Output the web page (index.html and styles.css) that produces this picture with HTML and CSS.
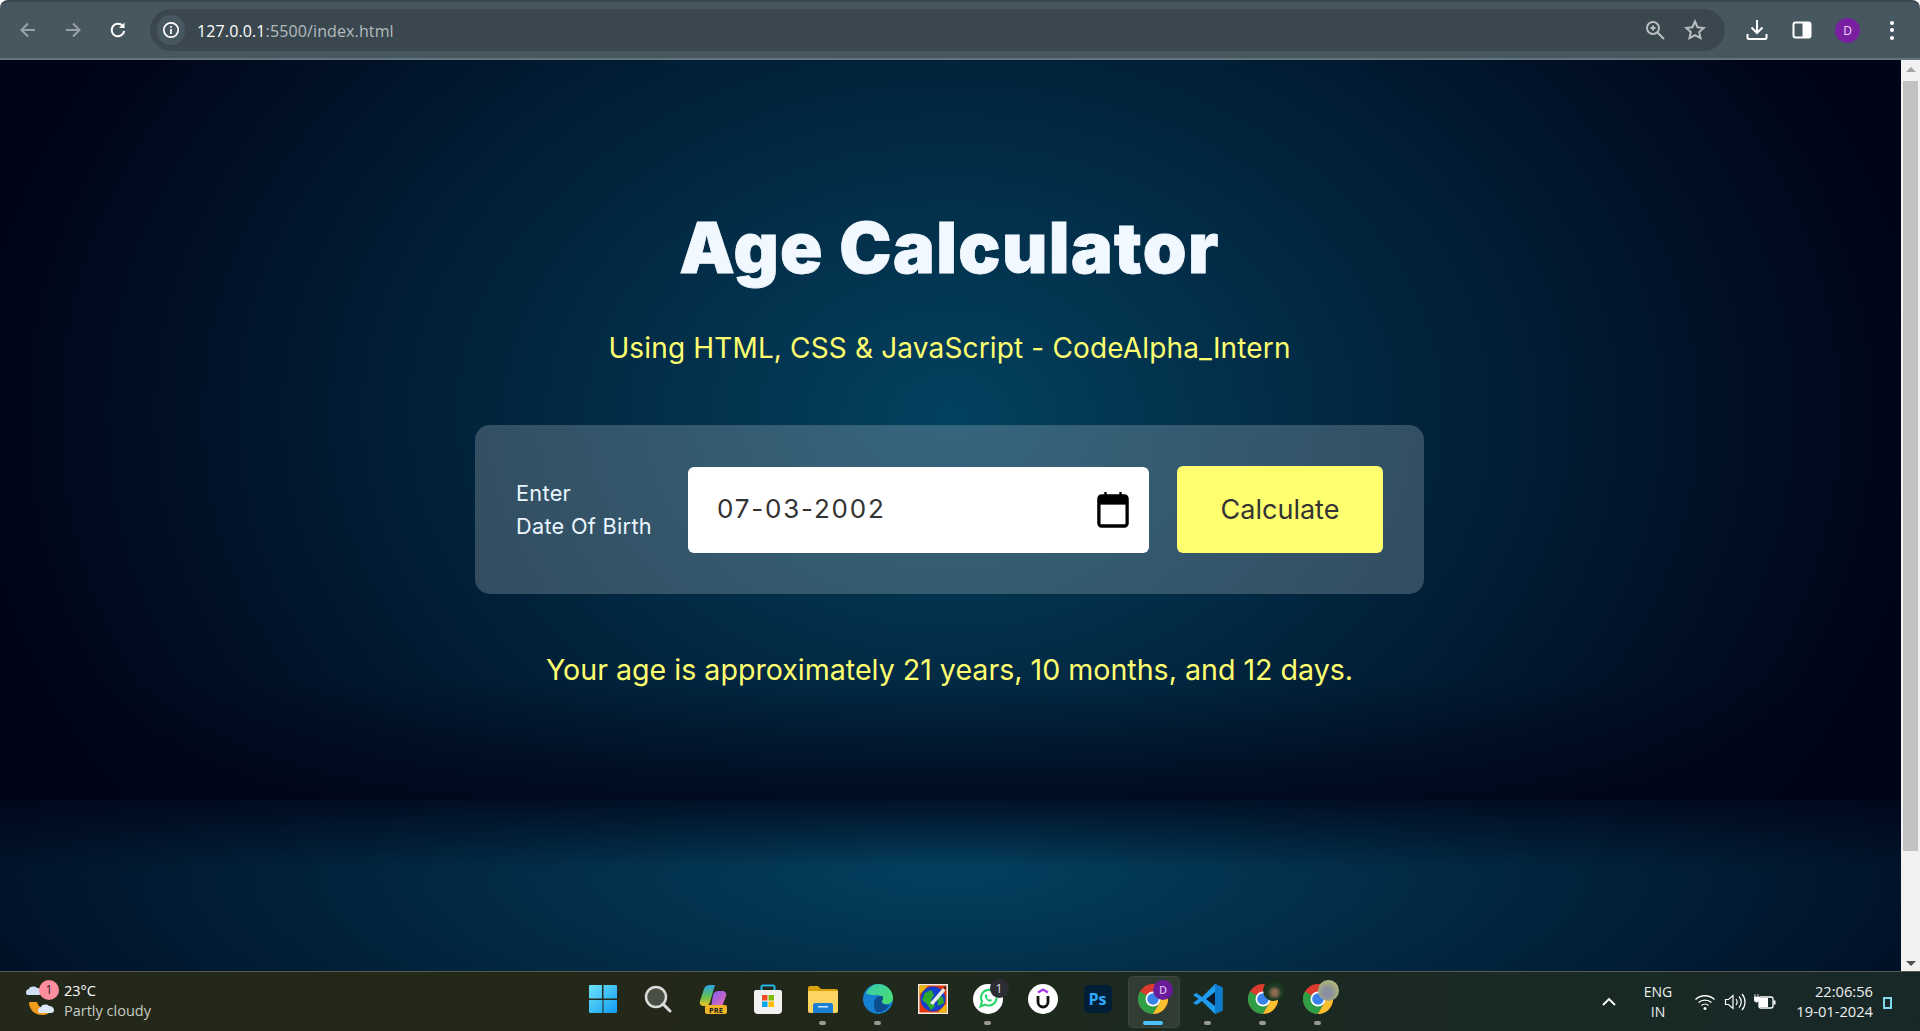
FILE: index.html
```html
<!DOCTYPE html>
<html lang="en">
<head>
<meta charset="utf-8">
<title>Age Calculator</title>
<link rel="stylesheet" href="styles.css">
</head>
<body>
<div class="window">
  <header class="toolbar">
    <div class="nav">
      <svg class="ic" width="20" height="20" viewBox="0 0 20 20"><path d="M17 10H4M10 3.5 3.5 10l6.500 6.500" class="st dim"/></svg>
      <svg class="ic" width="20" height="20" viewBox="0 0 20 20"><path d="M3 10h13M10 3.500l6.500 6.500-6.500 6.500" class="st dim"/></svg>
      <svg class="ic" width="20" height="20" viewBox="0 0 20 20"><path d="M16.200 11a6.300 6.300 0 1 1-1.500-5.200" class="st wh"/><path d="M16.500 2.500v5.500H11z" class="fl"/></svg>
    </div>
    <div class="omni">
      <div class="info"><svg width="18" height="18" viewBox="0 0 18 18"><circle cx="9" cy="9" r="7.200" class="st wh thin"/><path d="M9 8v5M9 5v1.800" class="st wh thin"/></svg></div>
      <div class="url"><span class="host">127.0.0.1</span>:5500/index.html</div>
      <svg class="zoom-ic" width="20" height="20" viewBox="0 0 20 20"><circle cx="8" cy="8" r="6" class="st gr"/><path d="M12.500 12.500 19 19M5.500 8h5M8 5.500v5" class="st gr"/></svg>
      <svg class="star-ic" width="22" height="22" viewBox="0 0 22 22"><path d="m11 2.500 2.600 5.700 6.200.7-4.600 4.200 1.300 6.100L11 16.200l-5.500 3 1.300-6.100-4.600-4.200 6.200-.7z" class="st gr"/></svg>
    </div>
    <div class="actions">
      <svg width="22" height="22" viewBox="0 0 22 22"><path d="M11 1v13M5.500 8.500 11 14l5.500-5.500M1.500 15v3.500c0 1 .5 1.500 1.500 1.500h16c1 0 1.500-.5 1.500-1.500V15" class="st wh"/></svg>
      <svg width="20" height="20" viewBox="0 0 20 20"><rect x="1.500" y="2.500" width="17" height="15" rx="2" class="st wh"/><rect x="10.500" y="2.500" width="8" height="15" class="fl"/></svg>
      <div class="avatar">D</div>
      <div class="kebab"><i></i><i></i><i></i></div>
    </div>
  </header>

  <div class="viewport">
    <main class="page">
      <h1 class="title">Age Calculator</h1>
      <p class="subtitle">Using HTML, CSS &amp; JavaScript - CodeAlpha_Intern</p>
      <section class="card">
        <div class="label">Enter<br>Date Of Birth</div>
        <div class="date">
          <span class="date-text">07-03-2002</span>
          <svg class="cal" width="32" height="37" viewBox="0 0 34 38" preserveAspectRatio="none"><path d="M9 1v6M25 1v6" stroke="#000" stroke-width="2.500"/><rect x="2" y="5" width="30" height="31" rx="3" fill="#fff" stroke="#000" stroke-width="3.500"/><rect x="2" y="5" width="30" height="9" fill="#000"/></svg>
        </div>
        <button class="calc" type="button">Calculate</button>
      </section>
      <p class="result">Your age is approximately 21 years, 10 months, and 12 days.</p>
    </main>
    <aside class="scrollbar">
      <div class="arrow up"></div>
      <div class="track"><div class="thumb"></div></div>
      <div class="arrow down"></div>
    </aside>
  </div>

  <footer class="taskbar">
    <div class="weather">
      <div class="weather-ic">
        <svg width="36" height="36" viewBox="0 0 36 36"><path d="M5 18c0 9 7 13 13 13 5 0 8-2 10-6-6 2-13 0-15-7z" fill="#f09a1a"/><path d="M2 8c0-2 2-3 3-3 1-3 6-3 8-1 3 0 5 2 5 4 0 2-1 3-3 3H4C2 11 2 9 2 8z" fill="#cfe0f5"/><path d="M14 26c0-2 2-3 3-3 1-3 6-3 8-1 3 0 5 2 5 4 0 2-1 3-3 3H16c-2 0-2-2-2-3z" fill="#dbe8f8"/></svg>
        <span class="badge-pink">1</span>
      </div>
      <div class="weather-text"><div class="temp">23°C</div><div class="sky">Partly cloudy</div></div>
    </div>

    <div class="apps">
      <div class="app">
        <svg width="30" height="30" viewBox="0 0 30 30"><defs><linearGradient id="win" x1="0" y1="0" x2="1" y2="1"><stop offset="0" stop-color="#6fe3fb"/><stop offset="1" stop-color="#0f9bf0"/></linearGradient></defs><path d="M1 2a1 1 0 0 1 1-1h12v13.500H1zM15.500 1H28a1 1 0 0 1 1 1v12.500H15.500zM1 16h13.500v13H2a1 1 0 0 1-1-1zM15.500 16H29v12a1 1 0 0 1-1 1H15.500z" fill="url(#win)"/></svg>
      </div>
      <div class="app">
        <svg width="28" height="28" viewBox="0 0 28 28"><circle cx="12" cy="12" r="10" fill="#4a4f44" stroke="#dcdcdc" stroke-width="2.500"/><path d="m19 19 7 7" stroke="#dcdcdc" stroke-width="3" stroke-linecap="round"/></svg>
      </div>
      <div class="app">
        <svg width="30" height="30" viewBox="0 0 30 30"><defs><linearGradient id="cop1" x1="0" y1="0" x2="0" y2="1"><stop offset="0" stop-color="#27a4e8"/><stop offset=".6" stop-color="#6cc04a"/><stop offset="1" stop-color="#f7c52b"/></linearGradient><linearGradient id="cop2" x1="0" y1="0" x2="1" y2="1"><stop offset="0" stop-color="#7a5cf0"/><stop offset="1" stop-color="#f36cb2"/></linearGradient></defs><path d="M2 17 6 5c1-3 3-4 6-4h5l-5 17c-1 3-3 4-6 4-3 0-5-2-4-5z" fill="url(#cop1)"/><path d="M15 11c1-3 3-4 5-4h4c3 0 5 2 4 5l-3 8c-1 2-2 3-5 3h-7z" fill="url(#cop2)"/><rect x="7" y="21" width="22" height="9" rx="2" fill="#f0b429"/><text x="18" y="28.500" class="pre">PRE</text></svg>
      </div>
      <div class="app">
        <svg width="30" height="30" viewBox="0 0 30 30"><path d="M8.500 7V3c0-1 .5-1.500 1.500-1.500h10c1 0 1.500.5 1.500 1.500v4" fill="none" stroke="#25b5e8" stroke-width="2"/><path d="M1 8a2 2 0 0 1 2-2h24a2 2 0 0 1 2 2v18a4 4 0 0 1-4 4H5a4 4 0 0 1-4-4z" fill="#f2f2f2"/><rect x="9" y="11" width="5.500" height="5.500" fill="#f25022"/><rect x="15.500" y="11" width="5.500" height="5.500" fill="#7fba00"/><rect x="9" y="17.500" width="5.500" height="5.500" fill="#00a4ef"/><rect x="15.500" y="17.500" width="5.500" height="5.500" fill="#ffb900"/></svg>
      </div>
      <div class="app running">
        <svg width="30" height="28" viewBox="0 0 30 28"><path d="M0 3a2 2 0 0 1 2-2h8l3 3h15a2 2 0 0 1 2 2v3H0z" fill="#d9a008"/><path d="M0 6h30v20a2 2 0 0 1-2 2H2a2 2 0 0 1-2-2z" fill="#fcd462"/><path d="M5 20a2 2 0 0 1 2-2h16a2 2 0 0 1 2 2v8H5z" fill="#1d7fd1"/><rect x="10" y="21" width="10" height="1.500" fill="#cfe8ff"/></svg>
      </div>
      <div class="app running">
        <svg width="30" height="30" viewBox="0 0 30 30"><defs><linearGradient id="edge" x1="0" y1="0" x2="1" y2="1"><stop offset="0" stop-color="#37c8b0"/><stop offset="1" stop-color="#4ce06a"/></linearGradient></defs><circle cx="15" cy="15" r="15" fill="#1580cf"/><path d="M3 9C6 3 11 0 15 0c9 0 15 7 15 14 0 4-3 6-7 6-3 0-5-2-4-3 1-3-1-6-5-6-4 0-9 0-11-2z" fill="url(#edge)"/><path d="M11 19c0-4 3-7 7-7 2 0 3 2 1 5-1 2 2 4 5 4 1 0 2 0 3-1-3 6-9 9-13 8-3-2-3-6-3-9z" fill="#0c4d8f"/></svg>
      </div>
      <div class="app">
        <svg width="30" height="30" viewBox="0 0 30 30"><rect width="30" height="30" fill="#f6efe0"/><rect x="1.500" y="1.500" width="27" height="27" fill="#e2340f"/><path d="M1.500 1.500h9l-9 9zM28.500 28.500h-9l9-9z" fill="#e8b80f"/><circle cx="15" cy="15" r="12.500" fill="#1240c8"/><path d="M7 9l6-3 3 5-3 5 4 6-4 4-5-7-4-3zM19 12l6 1 1 6-6 3z" fill="#2fa82f"/><path d="m12 19 13-15 2.500 2.500L15 21z" fill="#e8e8e8"/><path d="m25 4 3-2v3z" fill="#222"/></svg>
      </div>
      <div class="app running">
        <div class="wa"><svg width="30" height="30" viewBox="0 0 30 30"><circle cx="15" cy="15" r="15" fill="#fff"/><path d="M7.500 22.500 9 17.500a7.800 7.800 0 1 1 3 3z" fill="none" stroke="#25d366" stroke-width="2"/><path d="M12.500 10.500c-1 1-1 2.500.5 4.500s3.500 3 5 2.500l1-1.500-2-1-1 .7c-1-.5-1.800-1.400-2.200-2.400l.8-1-1-2z" fill="#25d366"/></svg><span class="badge-dark">1</span></div>
      </div>
      <div class="app">
        <svg width="30" height="30" viewBox="0 0 30 30"><circle cx="15" cy="15" r="15" fill="#fff"/><path d="m10 8.500 5-3 5 3" fill="none" stroke="#a435f0" stroke-width="2.200"/><path d="M10 12v6a5 5 0 0 0 10 0v-6" fill="none" stroke="#111" stroke-width="2.800"/></svg>
      </div>
      <div class="app">
        <div class="ps">Ps</div>
      </div>
      <div class="app active">
        <svg width="30" height="30" viewBox="0 0 30 30"><use href="#chrome"/></svg>
        <span class="badge-profile">D</span>
      </div>
      <div class="app running">
        <svg width="30" height="30" viewBox="0 0 30 30"><path d="M22 0 29.500 3.500v23L22 30 9 17l-5.500 4L0 19l5.500-4L0 11l3.500-2L9 13z" fill="#1f9cf0"/><path d="M22 8v14l-9-7z" fill="#0a1a2a"/><path d="M22 0 29.500 3.500v23L22 30z" fill="#0d7ccc"/></svg>
      </div>
      <div class="app running">
        <svg width="30" height="30" viewBox="0 0 30 30"><use href="#chrome"/></svg>
        <span class="badge-photo green"></span>
      </div>
      <div class="app running">
        <svg width="30" height="30" viewBox="0 0 30 30"><use href="#chrome"/></svg>
        <span class="badge-photo tan"></span>
      </div>
    </div>

    <div class="tray">
      <svg class="caret" width="16" height="10" viewBox="0 0 16 10"><path d="m2 8 6-6 6 6" fill="none" stroke="#fff" stroke-width="1.800"/></svg>
      <div class="lang">ENG<br>IN</div>
      <svg class="wifi" width="22" height="18" viewBox="0 0 22 18"><path d="M1.500 6.500c5-5 14-5 19 0M4.500 9.500c3.500-3.300 9.500-3.300 13 0M7.500 12.500c2-1.800 5-1.800 7 0" fill="none" stroke="#fff" stroke-width="1.300"/><circle cx="11" cy="15.500" r="1.500" fill="#fff"/></svg>
      <svg class="vol" width="22" height="18" viewBox="0 0 22 18"><path d="M1.500 6.500h3l4.500-4v13l-4.500-4h-3z" fill="none" stroke="#fff" stroke-width="1.200"/><path d="M12 6c1.500 2 1.500 4 0 6M15 3.500c3 3 3 8 0 11M18 1c4 4.500 4 11.500 0 16" fill="none" stroke="#fff" stroke-width="1.200"/></svg>
      <svg class="batt" width="22" height="18" viewBox="0 0 22 18"><rect x="5" y="4" width="14" height="11" rx="2" fill="none" stroke="#fff" stroke-width="1.300"/><rect x="5" y="5" width="9" height="9" fill="#fff"/><rect x="19.500" y="7.500" width="2" height="4" fill="#fff"/><path d="M1 1v3M4 1v3M0 4h5v2c0 2-1 3-2.500 3S0 8 0 6z" fill="#fff" stroke="#fff" stroke-width=".8"/></svg>
      <div class="clock">22:06:56<br>19-01-2024</div>
      <div class="notif"></div>
    </div>
  </footer>
</div>

<svg class="defs" width="0" height="0">
  <defs>
    <g id="chrome">
      <circle cx="15" cy="15" r="15" fill="#de3b2f"/>
      <path d="M15 15 2 7.500A15 15 0 0 0 15 30l7.500-13z" fill="#2f9e44"/>
      <path d="M15 15l7.500 2L15 30A15 15 0 0 0 28 7.500H15z" fill="#fbc02d"/>
      <circle cx="15" cy="15" r="7.500" fill="#fff"/>
      <circle cx="15" cy="15" r="5.800" fill="#3b82e8"/>
    </g>
  </defs>
</svg>
</body>
</html>
```

FILE: styles.css
```css
* { box-sizing: border-box; }
html, body { margin: 0; height: 100%; }
body { overflow: hidden; font-family: "Inter", "Liberation Sans", sans-serif; }
.defs { display: block; height: 0; }

.window { height: 1031px; display: flex; flex-direction: column; }

/* browser toolbar */
.toolbar {
  height: 60px; flex: none; display: flex; align-items: center;
  background: #47575f; border-top: 2px solid #38464e;
  border-bottom: 2px solid #66757c; padding: 0 0 0 18px; border-radius: 8px 8px 0 0;
}
.nav { display: flex; align-items: center; gap: 25px; margin-right: 22px; width: 110px; }
.ic { flex: none; }
.st { fill: none; stroke-width: 2; }
.dim { stroke: #98a3a8; }
.wh { stroke: #fff; }
.gr { stroke: #b9bfc2; }
.thin { stroke-width: 1.700; }
.fl { fill: #fff; }
.omni {
  width: 1575px; height: 42px; flex: none; background: #3b474e; border-radius: 21px;
  display: flex; align-items: center; padding-left: 7px; padding-right: 19px;
}
.info {
  width: 28px; height: 30px; border-radius: 15px; background: #47575f;
  display: flex; align-items: center; justify-content: center; flex: none;
}
.url { margin: 1px 0 0 12px; flex: 1; font: 16px/20px "Open Sans", sans-serif; color: #b4bcc0; letter-spacing: .12px; }
.host { color: #fff; }
.zoom-ic { margin-right: 19px; }
.actions { flex: 1; display: flex; align-items: center; padding-left: 21px; }
.actions > svg:nth-child(2) { margin-left: 24px; }
.avatar {
  width: 25px; height: 25px; border-radius: 50%; background: #7a1fa2; color: #f0d9ff;
  font: 12px/25px "Open Sans", sans-serif; text-align: center; margin-left: 23px;
}
.kebab { display: flex; flex-direction: column; gap: 3.500px; margin-left: 30px; }
.kebab i { width: 4px; height: 4px; border-radius: 50%; background: #fff; display: block; }

/* page */
.viewport { flex: 1; display: flex; min-height: 0; }
.page {
  flex: 1; display: flex; flex-direction: column; align-items: center;
  padding: 146px 2px 0 0; color: #fff;
  background:
    linear-gradient(to bottom, rgba(0,4,23,0) 620px, rgba(0,4,23,.72) 740px, rgba(0,4,23,0) 808px),
    radial-gradient(ellipse 1270px 390px at 50% 68px, #03405f 0%, #000417 100%) 0 740px / 100% 172px no-repeat,
    radial-gradient(ellipse 970px 720px at 50% 355px, #03415f 0%, #000417 100%) 0 0 / 100% 740px no-repeat,
    #000417;
}
.title {
  margin: 0; font: 900 70px/84px "Inter", sans-serif; color: #f2f8ff; letter-spacing: 1.400px;
  -webkit-text-stroke: .8px #f2f8ff;
}
.subtitle { margin: 41px 0 0; font: 400 28px/34px "Inter", sans-serif; color: #ffff70; letter-spacing: .15px; }
.card {
  margin-top: 60px; width: 949px; height: 169px; background: rgba(255,255,255,.2);
  border-radius: 15px; display: flex; align-items: center; padding: 0 41px;
}
.label { width: 172px; font-size: 21.700px; line-height: 33px; color: #eaf6ff; flex: none; letter-spacing: .3px; }
.date {
  width: 461px; height: 86px; background: #fff; border-radius: 6px; flex: none;
  display: flex; align-items: center; justify-content: space-between; padding: 0 20px 0 29px; margin-top: 1px;
}
.date-text { font-size: 26px; color: #333; letter-spacing: 1.800px; margin-bottom: 4px; }
.cal { margin-bottom: 1px; }
.calc {
  width: 206px; height: 87px; margin-left: 28px; border: 0; border-radius: 6px; background: #ffff70;
  font: 400 27px "Inter", sans-serif; color: #333;
}
.result { margin: 58px 0 0; font-size: 28.600px; line-height: 36px; color: #ffff70; }

/* scrollbar */
.scrollbar { width: 19px; flex: none; background: #f1f1f1; display: flex; flex-direction: column; align-items: center; }
.arrow { width: 0; height: 0; border-left: 5px solid transparent; border-right: 5px solid transparent; flex: none; }
.arrow.up { border-bottom: 5px solid #a3a3a3; margin: 7px 0 9px; }
.arrow.down { border-top: 5px solid #505050; margin: 6px 0 5px; }
.track { flex: 1; width: 100%; padding: 0 2px; }
.thumb { height: 770px; background: #c1c1c1; }

/* taskbar */
.taskbar {
  height: 60px; flex: none; display: grid; grid-template-columns: 575px 770px 1fr; align-items: center;
  background: linear-gradient(90deg, #23281a 0%, #232818 35%, #1a2a22 70%, #182828 100%);
  border-top: 1px solid #555a4c; color: #fff; font-family: "Open Sans", sans-serif;
}
.weather { display: flex; align-items: center; padding-left: 24px; }
.weather-ic { position: relative; width: 40px; height: 40px; display: flex; align-items: center; flex: none; }
.badge-pink {
  position: absolute; left: 15px; top: -2px; width: 20px; height: 20px; border-radius: 50%;
  background: #ff8e9e; color: #222; font-size: 12px; line-height: 20px; text-align: center;
}
.weather-text { font-size: 14.500px; line-height: 20px; margin-bottom: 2px; }
.temp { color: #fff; }
.sky { color: #c8ccc4; }

.apps { display: flex; height: 100%; }
.app { position: relative; width: 55px; height: 100%; display: flex; align-items: center; justify-content: center; padding-bottom: 5px; }
.running::after {
  content: ""; position: absolute; left: 50%; bottom: 6px; width: 7px; height: 4px; margin-left: -4px;
  border-radius: 2px; background: #9a9a94;
}
.active::before {
  content: ""; position: absolute; left: 3px; top: 4px; width: 50px; height: 50px; border-radius: 5px;
  background: rgba(255,255,255,.09); border: 1px solid rgba(255,255,255,.06);
}
.active::after {
  content: ""; position: absolute; left: 50%; bottom: 6px; width: 20px; height: 4px; margin-left: -10px;
  border-radius: 2px; background: #4cc2ff;
}
.app svg { position: relative; }
.pre { font: 700 7.500px "Open Sans", sans-serif; fill: #222; text-anchor: middle; }
.wa { position: relative; width: 30px; height: 30px; }
.badge-dark {
  position: absolute; left: 17px; top: -5px; width: 19px; height: 19px; border-radius: 50%;
  background: #2c2c34; color: #d8d8d8; font-size: 13px; line-height: 19px; text-align: center;
}
.ps {
  width: 28px; height: 28px; border-radius: 5px; background: #001e36; color: #31a8ff;
  font: 700 16px/28px "Open Sans", sans-serif; text-align: center;
}
.badge-profile {
  position: absolute; left: 28px; top: 8px; width: 20px; height: 20px; border-radius: 50%;
  background: #6a1b9a; color: #d9b3f0; font-size: 11px; font-weight: 600; line-height: 20px; text-align: center;
}
.badge-photo { position: absolute; left: 28px; top: 8px; width: 21px; height: 21px; border-radius: 50%; }
.badge-photo.green { background: radial-gradient(circle at 55% 60%, #8a6a50 0 15%, #1f3d24 40%, #0f2012 100%); }
.badge-photo.tan { background: radial-gradient(circle at 45% 60%, #8a8fa0 0 25%, #a8ad7e 60%, #c8cba0 100%); }

.tray { display: flex; align-items: center; height: 100%; }
.caret { margin-left: 256px; }
.lang { width: 60px; margin-left: 11px; font-size: 14px; line-height: 19.500px; text-align: center; color: #f0f0f0; }
.wifi { margin-left: 6px; }
.vol { margin-left: 8px; }
.batt { margin-left: 8px; }
.clock { width: 92px; margin-left: 5px; font-size: 14.700px; line-height: 19.500px; text-align: right; color: #f0f0f0; white-space: nowrap; }
.notif { width: 9px; height: 12px; border: 2px solid #7fd8ee; margin-left: 10px; margin-top: 3px; }
```
